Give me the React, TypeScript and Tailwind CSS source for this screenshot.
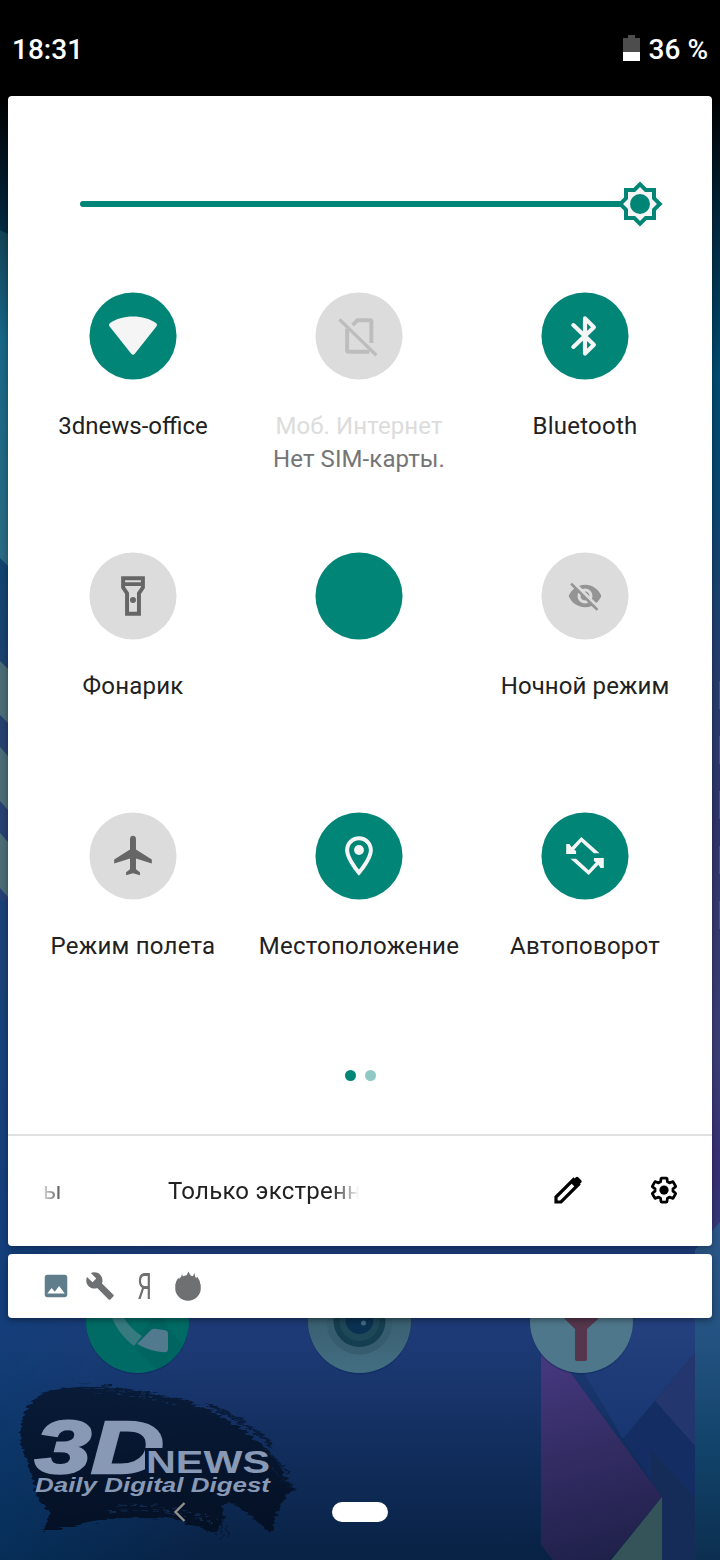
import type { ReactNode } from 'react'
import { MdBuild, MdImage, MdVisibilityOff } from 'react-icons/md'

type Tile = {
  id: string
  label?: string
  sub?: string
  on?: boolean
  disabled?: boolean
  tracking?: string
  icon?: ReactNode
}

const tiles: Tile[] = [
  {
    id: 'wifi',
    label: '3dnews-office',
    tracking: 'tracking-normal',
    on: true,
    icon: (
      <svg viewBox="0 0 48 48" className="w-12 h-12 overflow-visible" fill="#f5f5f5">
        <path d="M22.4 42.100 0.4 14.500C-.6 13.200-.4 11.700.9 10.800 7 6.600 15 4.300 24 4.300s17 2.300 23.100 6.500c1.300.9 1.500 2.400.5 3.700L25.600 42.100c-.9 1.100-2.300 1.100-3.200 0z" />
      </svg>
    ),
  },
  {
    id: 'mobile',
    label: 'Моб. Интернет',
    sub: 'Нет SIM-карты.',
    tracking: 'tracking-[0.1px]',
    disabled: true,
    icon: (
      <svg viewBox="0 0 48 48" className="w-12 h-12" fill="none" stroke="#bdbdbd" strokeWidth="4">
        <path d="M17.500 13l5-5H35a1.500 1.500 0 0 1 1.500 1.500V31" />
        <path d="M12 16.500V38.500A1.500 1.500 0 0 0 13.500 40H34.500" />
        <path d="M4.200 7.200 41.500 43.500" strokeWidth="3.400" />
      </svg>
    ),
  },
  {
    id: 'bluetooth',
    label: 'Bluetooth',
    on: true,
    icon: (
      <svg viewBox="0 0 24 24" className="w-12 h-12" fill="none" stroke="#f5f5f5" strokeWidth="2.100" strokeLinecap="round" strokeLinejoin="round">
        <path d="M6.100 6.500 16.500 16.400 12 20.900V3.100l4.500 4.500L6.100 17.500" />
      </svg>
    ),
  },
  {
    id: 'flashlight',
    label: 'Фонарик',
    icon: (
      <svg viewBox="0 0 24 24" className="w-12 h-12" fill="#666666">
        <path fillRule="evenodd" d="M6 2v6l2 3v11h8V11l2-3V2zm10 2v1H8V4zm-2 6.400V20h-4v-9.600L8 7.400V7h8v.4z" />
        <circle cx="12" cy="14" r="1.500" />
      </svg>
    ),
  },
  { id: 'blank', on: true },
  {
    id: 'night',
    label: 'Ночной режим',
    tracking: 'tracking-[0.1px]',
    icon: <MdVisibilityOff className="w-9 h-9 text-[#949494]" />,
  },
  {
    id: 'airplane',
    label: 'Режим полета',
    icon: (
      <svg viewBox="-.5 .25 24 24" className="w-12 h-12" fill="#666666">
        <path d="M21 16v-2l-8-5V3.500c0-.83-.67-1.500-1.500-1.500S10 2.670 10 3.500V9l-8 5v2l8-2.500V19l-2 1.500V22l3.500-1 3.500 1v-1.500L13 19v-5.500l8 2.500z" />
      </svg>
    ),
  },
  {
    id: 'location',
    label: 'Местоположение',
    on: true,
    icon: (
      <svg viewBox="0 0 24 24" className="w-12 h-12" fill="#f5f5f5">
        <path fillRule="evenodd" d="M12 2C8.130 2 5 5.130 5 9c0 5.250 7 13 7 13s7-7.750 7-13c0-3.870-3.130-7-7-7zM7 9c0-2.760 2.240-5 5-5s5 2.240 5 5c0 2.880-2.880 7.190-5 9.880C9.920 16.210 7 11.850 7 9z" />
        <circle cx="12" cy="9" r="2.500" />
      </svg>
    ),
  },
  {
    id: 'rotate',
    label: 'Автоповорот',
    on: true,
    icon: (
      <svg viewBox="0 0 48 48" className="w-12 h-12" fill="#f5f5f5">
        <path d="M5 12h3.300l2.200 3.200L20.300 4.700 38.700 21.300H33L20.300 9.600l-7.200 8 1.900 1.400v3H5z" />
        <path d="M5 12h3.300l2.200 3.200L20.300 4.700 38.700 21.300H33L20.300 9.600l-7.200 8 1.900 1.400v3H5z" transform="rotate(180 24 24)" />
      </svg>
    ),
  },
]

function Wallpaper() {
  return (
    <svg className="absolute inset-0 w-full h-full" viewBox="0 0 720 1560">
      <defs>
        <linearGradient id="base" gradientUnits="userSpaceOnUse" x1="0" y1="0" x2="0" y2="1560">
          <stop offset="0.062" stopColor="#000000" />
          <stop offset="0.14" stopColor="#03263c" />
          <stop offset="0.24" stopColor="#004b70" />
          <stop offset="0.33" stopColor="#0b456f" />
          <stop offset="0.48" stopColor="#28406f" />
          <stop offset="0.68" stopColor="#26407a" />
          <stop offset="0.8" stopColor="#1d3c7a" />
          <stop offset="0.86" stopColor="#1e3a76" />
          <stop offset="0.92" stopColor="#132f60" />
          <stop offset="1" stopColor="#082244" />
        </linearGradient>
        <linearGradient id="leftGlow" gradientUnits="userSpaceOnUse" x1="0" y1="0" x2="200" y2="0">
          <stop offset="0" stopColor="#00457c" stopOpacity="0.35" />
          <stop offset="1" stopColor="#00457c" stopOpacity="0" />
        </linearGradient>
        <linearGradient id="teal" gradientUnits="userSpaceOnUse" x1="0" y1="220" x2="0" y2="560">
          <stop offset="0" stopColor="#123f52" />
          <stop offset="0.35" stopColor="#186686" />
          <stop offset="1" stopColor="#296b82" />
        </linearGradient>
        <linearGradient id="rightEdge" gradientUnits="userSpaceOnUse" x1="0" y1="500" x2="0" y2="1290">
          <stop offset="0" stopColor="#243c6c" stopOpacity="0" />
          <stop offset="0.4" stopColor="#2f3569" />
          <stop offset="0.7" stopColor="#3b3e75" />
          <stop offset="0.85" stopColor="#372f73" />
          <stop offset="1" stopColor="#30407c" />
        </linearGradient>
        <linearGradient id="strip" gradientUnits="userSpaceOnUse" x1="0" y1="1230" x2="0" y2="1560">
          <stop offset="0" stopColor="#2b5888" />
          <stop offset="0.35" stopColor="#235180" />
          <stop offset="0.65" stopColor="#12446b" />
          <stop offset="1" stopColor="#0c2f50" />
        </linearGradient>
        <linearGradient id="purple" gradientUnits="userSpaceOnUse" x1="545" y1="1340" x2="600" y2="1560">
          <stop offset="0" stopColor="#493a83" />
          <stop offset="0.5" stopColor="#342d65" />
          <stop offset="1" stopColor="#20214b" />
        </linearGradient>
        <linearGradient id="facet" gradientUnits="userSpaceOnUse" x1="0" y1="1318" x2="0" y2="1450">
          <stop offset="0" stopColor="#25417f" />
          <stop offset="1" stopColor="#163570" />
        </linearGradient>
        <linearGradient id="camera" x1="0" y1="0" x2="0" y2="1">
          <stop offset="0.5" stopColor="#3a6071" />
          <stop offset="1" stopColor="#436e82" />
        </linearGradient>
        <linearGradient id="brush" x1="0" y1="0" x2="0" y2="1">
          <stop offset="0" stopColor="#081b38" />
          <stop offset="1" stopColor="#041024" />
        </linearGradient>
        <filter id="rough" x="-5%" y="-5%" width="110%" height="110%" colorInterpolationFilters="sRGB">
          <feTurbulence type="fractalNoise" baseFrequency="0.05 0.35" numOctaves="2" seed="4" />
          <feDisplacementMap in="SourceGraphic" scale="8" xChannelSelector="R" yChannelSelector="G" />
        </filter>
        <clipPath id="logoCut">
          <path d="M20 1400H180V1448H145V1480H20z" />
        </clipPath>
      </defs>

      <rect width="720" height="1560" fill="url(#base)" />
      <rect y="900" width="200" height="660" fill="url(#leftGlow)" />

      {/* left edge facets */}
      <path d="M0 230 8 234V566L0 558z" fill="url(#teal)" />
      <path d="M0 661 8 669V723L0 715zM0 747l8 9v54l-8-9zM0 833l8 9v55l-8-9z" fill="#4a6c76" />

      {/* right edge */}
      <path d="M712 500h8V1290h-8z" fill="url(#rightEdge)" />
      <path d="M719 681h1v28h-1zm0 55h1v28h-1zm0 55h1v28h-1zm0 55h1v28h-1zm0 55h1v28h-1z" fill="#3b5c7d" />

      {/* lower right facets */}
      <path d="M695 1250 720 1222V1560H695z" fill="url(#strip)" />
      <path d="M541 1300H695V1352L623 1439z" fill="url(#facet)" />
      <path d="M695 1352 655 1401l40 45z" fill="#24366e" />
      <path d="M623 1439l32-38 40 45v52l-33-1z" fill="#142d62" />
      <path d="M651 1450l44 48v62h-33v-63l-11-14z" fill="#142c57" />
      <path d="M541 1333 662 1497 610 1560H553L541 1545z" fill="url(#purple)" />
      <path d="M662 1497V1560H611z" fill="#34545a" />

      {/* dock: phone */}
      <circle cx="137.500" cy="1323" r="51.500" fill="#0b2a5c" opacity="0.5" />
      <circle cx="137.500" cy="1321.500" r="51.500" fill="#006b65" />
      <path d="M152 1318h10l21 28a51.500 51.500 0 0 1-27 23l-24-24z" fill="#006560" />
      <path d="M112 1318h12c4 7 10 13 18 18l-8 10c-10-8-17-16-22-28z" fill="#377b80" />
      <path d="M137 1344l14-14q2-1.500 4-1.300l10 1.500q3 .5 3 3.500v15q0 3.500-3.500 3.500-14-.5-27.500-8.200z" fill="#517a8e" />

      {/* dock: camera */}
      <circle cx="359.500" cy="1323" r="51.500" fill="#0b2a5c" opacity="0.5" />
      <circle cx="359.500" cy="1321.500" r="51.500" fill="url(#camera)" />
      <circle cx="359.500" cy="1321.500" r="33" fill="#365d6f" />
      <circle cx="359.500" cy="1321" r="26" fill="#153f51" />
      <circle cx="359.500" cy="1321" r="20" fill="#1e4758" />
      <circle cx="359.500" cy="1320" r="14" fill="#0b3152" />
      <circle cx="363.500" cy="1323" r="2.500" fill="#416b84" />

      {/* dock: browser */}
      <circle cx="581.500" cy="1323" r="51.500" fill="#0b2a5c" opacity="0.5" />
      <circle cx="581.500" cy="1321.500" r="51.500" fill="#4f778b" />
      <path d="M564 1315h34v4l-11 10v30q0 2-2 2h-8q-2 0-2-2v-30l-11-11z" fill="#55364c" />

      {/* brush stroke logo */}
      <g filter="url(#rough)">
        <path
          d="M44 1392C62 1386 83 1385 100 1386 135 1388 175 1396 205 1408 232 1422 256 1438 270 1452 282 1466 286 1480 293 1491 286 1494 282 1502 278 1512L270 1532 238 1506 228 1502C215 1508 230 1514 222 1522L216 1534C195 1524 175 1518 145 1518 105 1516 75 1527 42 1532L50 1512 40 1502C32 1485 32 1470 22 1450 18 1430 22 1405 44 1392z"
          fill="url(#brush)"
        />
        <path d="M205 1404q40 12 68 42M215 1410q34 14 58 38M268 1452l20 20M262 1460l32 30M228 1524v14M222 1520v20" fill="none" stroke="#081b38" strokeWidth="2" />
        <path d="M95 1393q45 1 85 12M85 1389q50 1 82 8M118 1506q50-4 100 14M108 1511q60-5 110 14" fill="none" stroke="#143562" strokeWidth="1" strokeDasharray="7 4" opacity="0.8" />
      </g>
      <g fill="#8899b6" fontFamily="Liberation Sans, Arial, sans-serif" fontWeight="700">
        <text x="35" y="1472.500" fontSize="75" fontStyle="italic" textLength="129" lengthAdjust="spacingAndGlyphs" stroke="#8899b6" strokeWidth="2.500" clipPath="url(#logoCut)">
          3D
        </text>
        <text x="146" y="1473" fontSize="31" textLength="124" lengthAdjust="spacingAndGlyphs">
          NEWS
        </text>
        <text x="35" y="1492" fontSize="19.500" fontStyle="italic" textLength="235" lengthAdjust="spacingAndGlyphs">
          Daily Digital Digest
        </text>
      </g>
    </svg>
  )
}

function StatusBar() {
  return (
    <header className="relative flex h-24 items-center justify-between bg-black pl-3 pr-3 text-[28px] font-medium text-white">
      <span className="pt-1">18:31</span>
      <div className="flex items-center gap-[9px]">
        <svg width="17" height="26" viewBox="0 0 17 26">
          <path d="M5 0h7v3h5v23H0V3h5z" fill="#4d4d4d" />
          <path d="M0 17h17v9H0z" fill="#ffffff" />
        </svg>
        <span className="pt-1">36 %</span>
      </div>
    </header>
  )
}

function BrightnessSlider() {
  return (
    <div className="flex h-[196px] items-center pt-5 pl-[72px] pr-12">
      <div className="h-1.5 flex-1 rounded-full bg-[#008577]" />
      <svg viewBox="0 0 24 24" className="-ml-2 w-12 h-12 shrink-0">
        <path d="M20 8.690V4h-4.690L12 .69 8.690 4H4v4.690L.69 12 4 15.310V20h4.690L12 23.310 15.310 20H20v-4.690L23.310 12z" fill="#008577" />
        <path d="M18 9.520V6h-3.520L12 3.520 9.520 6H6v3.520L3.520 12 6 14.480V18h3.520L12 20.480 14.480 18H18v-3.520L20.480 12z" fill="#f5f5f5" />
        <circle cx="12" cy="12" r="5" fill="#008577" />
      </svg>
    </div>
  )
}

function QuickTile({ tile }: { tile: Tile }) {
  return (
    <div className="flex h-[260px] flex-col items-center">
      <div className={`flex w-22 h-22 scale-[0.99] items-center justify-center rounded-full ${tile.on ? 'bg-[#008577]' : 'bg-[#dcdcdc]'}`}>
        {tile.icon}
      </div>
      <div className={`mt-[30px] whitespace-nowrap text-center text-2xl leading-[33px] ${tile.tracking ?? 'tracking-[0.24px]'}`}>
        <div className={tile.disabled ? 'text-[#dcdcdc]' : 'text-[#212121]'}>{tile.label}</div>
        {tile.sub && <div className="text-[#757575]">{tile.sub}</div>}
      </div>
    </div>
  )
}

function PanelFooter() {
  return (
    <div className="flex h-[112px] items-center border-t-2 border-[#e0e0e0] pl-9 pr-8">
      <div className="flex w-[315px] gap-[106px] overflow-hidden whitespace-nowrap text-2xl tracking-[0.24px] text-[#212121] [mask-image:linear-gradient(to_right,transparent_-6px,black_24px,black_288px,transparent)]">
        <span className="-ml-px">ы</span>
        <span>Только экстренный вызов</span>
      </div>
      <svg viewBox="0 0 28 28" className="mb-0.5 ml-auto w-7 h-7">
        <path d="M2 26v-5L19.500 3.500l5 5L7 26z" fill="none" stroke="#000000" strokeWidth="3.200" strokeLinejoin="miter" />
        <path d="M16.500 6.500l5.100-5.100q1.400-1.400 2.800 0l2.600 2.600q1.400 1.400 0 2.800L21.900 11.900z" fill="#000000" />
      </svg>
      <svg viewBox="0 0 24 24" className="mb-0.5 ml-[67px] mr-px w-[30px] h-[30px]">
        <path
          d="M19.140 12.940c.04-.3.06-.61.06-.94 0-.32-.02-.64-.07-.94l2.030-1.580c.18-.14.23-.41.12-.61l-1.920-3.320c-.12-.22-.37-.29-.59-.22l-2.390.96c-.5-.38-1.030-.7-1.620-.94l-.36-2.540c-.04-.24-.24-.41-.48-.41h-3.840c-.24 0-.43.17-.47.41l-.36 2.540c-.59.24-1.130.57-1.620.94l-2.390-.96c-.22-.08-.47 0-.59.22L2.740 8.870c-.12.21-.08.47.12.61l2.030 1.580c-.05.3-.09.63-.09.94s.02.64.07.94l-2.030 1.580c-.18.14-.23.41-.12.61l1.920 3.320c.12.22.37.29.59.22l2.390-.96c.5.38 1.030.7 1.620.94l.36 2.540c.05.24.24.41.48.41h3.840c.24 0 .44-.17.47-.41l.36-2.540c.59-.24 1.130-.56 1.620-.94l2.390.96c.22.08.47 0 .59-.22l1.920-3.320c.12-.22.07-.47-.12-.61z"
          fill="none"
          stroke="#000000"
          strokeWidth="2.200"
          strokeLinejoin="round"
        />
        <circle cx="12" cy="12" r="3.700" fill="#000000" />
      </svg>
    </div>
  )
}

function NotificationStrip() {
  return (
    <div className="mx-2 mt-2 flex h-16 items-center rounded-[4px] bg-white pl-[33px] text-[#6f7072] shadow-[0_2px_6px_rgba(0,0,0,0.4)]">
      <MdImage className="w-[30px] h-[30px] text-[#607d8b]" />
      <MdBuild className="ml-3.5 w-[30px] h-[30px]" />
      <span className="ml-[21px] flex w-4 justify-center pt-0.5 text-[36px] leading-8">
        <span className="inline-block origin-center scale-x-[0.64]">Я</span>
      </span>
      <svg viewBox="0 0 28 30" className="ml-[22px] h-[30px] w-7">
        <circle cx="14" cy="17" r="12.800" fill="#6f7072" />
        <path d="M1.300 15C1.500 11 3 8.500 4.500 7L6 9.500 8 3l1.500 4L12.500 4.500 14.500.5 17 5.500l2-.5L20.500 2l1 5.500L23.500 6q3 4 3.200 9z" fill="#6f7072" />
      </svg>
    </div>
  )
}

export default function App() {
  return (
    <div className="relative w-[720px] h-[1560px] overflow-hidden bg-black font-[Roboto,'Noto_Sans',sans-serif]">
      <Wallpaper />
      <StatusBar />

      <main className="relative">
        <section className="mx-2 flex h-[1150px] flex-col rounded-[4px] bg-white shadow-[0_2px_6px_rgba(0,0,0,0.35)]">
          <BrightnessSlider />
          <div className="grid grid-cols-[repeat(3,226px)] pl-3">
            {tiles.map((tile) => (
              <QuickTile key={tile.id} tile={tile} />
            ))}
          </div>
          <div className="-mt-0.5 flex flex-1 justify-center gap-[9px]">
            <span className="w-[11px] h-[11px] rounded-full bg-[#008577]" />
            <span className="w-[11px] h-[11px] rounded-full bg-[#8fc9c3]" />
          </div>
          <PanelFooter />
        </section>
        <NotificationStrip />
      </main>

      {/* navigation bar */}
      <nav className="absolute bottom-0 flex h-24 w-full items-center">
        <svg viewBox="0 0 12 20" className="ml-[174px] w-3 h-5">
          <path d="M10.500 1 1.500 10l9 9" fill="none" stroke="#908f8a" strokeWidth="2.400" />
        </svg>
        <div className="ml-[146px] h-5 w-14 rounded-full bg-white" />
      </nav>
    </div>
  )
}
